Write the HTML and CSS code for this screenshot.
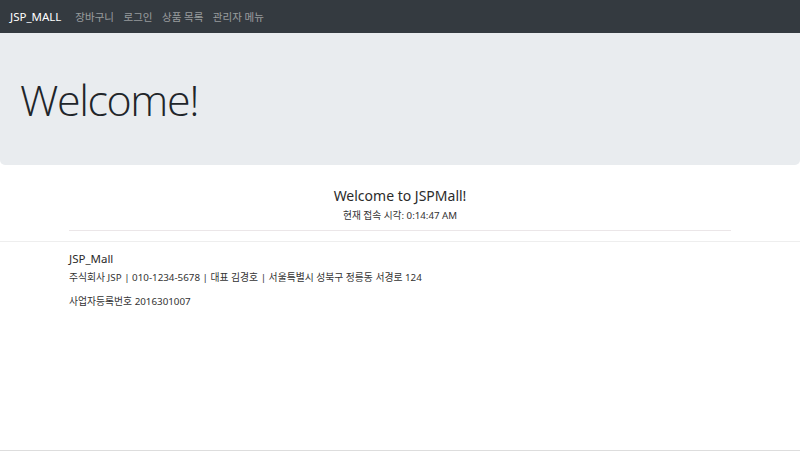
FILE: index.html
```html
<!DOCTYPE html>
<html lang="ko">
<head>
<meta charset="utf-8">
<link rel="stylesheet" href="styles.css">
</head>
<body>
<nav class="navbar">
  <a class="brand">JSP_MALL</a>
  <ul class="nav-links">
    <li>장바구니</li>
    <li>로그인</li>
    <li>상품 목록</li>
    <li>관리자 메뉴</li>
  </ul>
</nav>
<div class="jumbotron">
  <h1 class="display">Welcome!</h1>
</div>
<main class="container">
  <div class="intro">
    <h3 class="intro-title">Welcome to JSPMall!</h3>
    <p class="intro-time">현재 접속 시각: 0:14:47 AM</p>
  </div>
  <hr class="rule">
</main>
<footer class="footer">
  <div class="container footer-inner">
    <h4 class="footer-title">JSP_Mall</h4>
    <p class="footer-line">주식회사 JSP | 010-1234-5678 | 대표 김경호 | 서울특별시 성북구 정릉동 서경로 124</p>
    <p class="footer-line">사업자등록번호 2016301007</p>
  </div>
</footer>
</body>
</html>
```

FILE: styles.css
```css
* { box-sizing: border-box; }
html, body { height: 100%; }
body {
  margin: 0;
  font-family: "Noto Sans", "Noto Sans CJK KR", sans-serif;
  color: #212529;
  background: #fff;
  display: flex;
  flex-direction: column;
  border-bottom: 1px solid #ddd;
}
.navbar {
  height: 33px;
  background: #343a40;
  display: flex;
  align-items: center;
  padding: 0 10px;
}
.brand {
  color: #fff;
  font-size: 11.5px;
  margin-right: 14px;
}
.nav-links {
  list-style: none;
  margin: 0;
  padding: 0;
  display: flex;
  gap: 9.5px;
}
.nav-links li {
  color: rgba(255,255,255,.5);
  font-size: 10.5px;
}
.jumbotron {
  height: 132px;
  background: #e9ecef;
  border-radius: 0 0 5px 5px;
  padding: 0 20px;
  display: flex;
  align-items: center;
}
.display {
  margin: 0;
  font-family: "Open Sans", sans-serif;
  font-weight: 300;
  font-size: 43px;
  line-height: 1;
  color: #212529;
  letter-spacing: -1.4px;
}
.container {
  width: 662px;
  margin: 0 auto;
}
.intro {
  text-align: center;
  padding-top: 21px;
}
.intro-title {
  margin: 0;
  font-weight: 400;
  font-size: 14px;
  line-height: 20px;
  color: #2b2b2b;
}
.intro-time {
  margin: 3px 0 0;
  font-size: 9.7px;
  line-height: 14px;
  color: #333;
}
.rule {
  margin: 7px 0 0;
  border: 0;
  border-top: 1px solid #ebe6e8;
}
.footer {
  margin-top: 10px;
  border-top: 1px solid #eeeeee;
}
.footer-inner {
  padding-top: 8px;
}
.footer-title {
  margin: 0;
  font-weight: 400;
  font-size: 11.5px;
  line-height: 17px;
  color: #2b2b2b;
}
.footer-line {
  margin: 4px 0 10px;
  font-size: 9.8px;
  line-height: 14px;
  color: #333;
}
```
